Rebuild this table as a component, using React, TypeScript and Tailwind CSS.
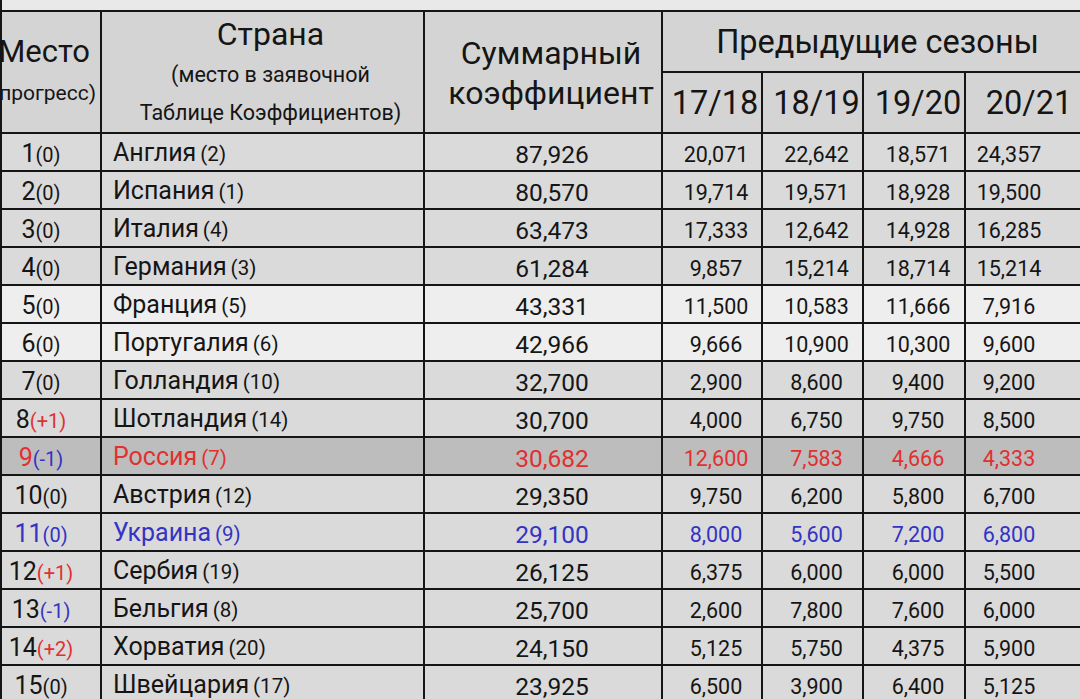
import React from "react";

type Row = {
  place: number;
  delta: string;
  country: string;
  entry: number;
  total: string;
  seasons: string[];
  tone?: "light" | "dark";
  color?: "red" | "blue";
};

const rows: Row[] = [
  { place: 1, delta: "0", country: "Англия", entry: 2, total: "87,926", seasons: ["20,071", "22,642", "18,571", "24,357"] },
  { place: 2, delta: "0", country: "Испания", entry: 1, total: "80,570", seasons: ["19,714", "19,571", "18,928", "19,500"] },
  { place: 3, delta: "0", country: "Италия", entry: 4, total: "63,473", seasons: ["17,333", "12,642", "14,928", "16,285"] },
  { place: 4, delta: "0", country: "Германия", entry: 3, total: "61,284", seasons: ["9,857", "15,214", "18,714", "15,214"] },
  { place: 5, delta: "0", country: "Франция", entry: 5, total: "43,331", seasons: ["11,500", "10,583", "11,666", "7,916"], tone: "light" },
  { place: 6, delta: "0", country: "Португалия", entry: 6, total: "42,966", seasons: ["9,666", "10,900", "10,300", "9,600"], tone: "light" },
  { place: 7, delta: "0", country: "Голландия", entry: 10, total: "32,700", seasons: ["2,900", "8,600", "9,400", "9,200"] },
  { place: 8, delta: "+1", country: "Шотландия", entry: 14, total: "30,700", seasons: ["4,000", "6,750", "9,750", "8,500"] },
  { place: 9, delta: "-1", country: "Россия", entry: 7, total: "30,682", seasons: ["12,600", "7,583", "4,666", "4,333"], tone: "dark", color: "red" },
  { place: 10, delta: "0", country: "Австрия", entry: 12, total: "29,350", seasons: ["9,750", "6,200", "5,800", "6,700"] },
  { place: 11, delta: "0", country: "Украина", entry: 9, total: "29,100", seasons: ["8,000", "5,600", "7,200", "6,800"], color: "blue" },
  { place: 12, delta: "+1", country: "Сербия", entry: 19, total: "26,125", seasons: ["6,375", "6,000", "6,000", "5,500"] },
  { place: 13, delta: "-1", country: "Бельгия", entry: 8, total: "25,700", seasons: ["2,600", "7,800", "7,600", "6,000"] },
  { place: 14, delta: "+2", country: "Хорватия", entry: 20, total: "24,150", seasons: ["5,125", "5,750", "4,375", "5,900"] },
  { place: 15, delta: "0", country: "Швейцария", entry: 17, total: "23,925", seasons: ["6,500", "3,900", "6,400", "5,125"] },
];

const cell = "border-2 border-[#151515] p-0";
const body = "border-2 border-[#151515] pb-0 pt-[5px]";

// сдвиг содержимого в колонках сезонов (как на скриншоте)
const seasonPad = ["pl-[8px]", "pl-[8px]", "pl-[8px]", "pr-[40px]"];
const yearPad = ["pl-[6px]", "pl-[8px]", "pl-[8px]", "pl-[0px]"];

function deltaColor(delta: string, row: Row) {
  if (delta.startsWith("+")) return "text-[#e03030]";
  if (delta.startsWith("-")) return "text-[#3333c4]";
  if (row.color === "blue") return "text-[#3333c4]";
  return "";
}

export default function App() {
  return (
    <div className="h-[699px] w-[1080px] overflow-hidden bg-[#e9e9e9] font-['Roboto',sans-serif] text-[#151515]">
      {/* полоска над таблицей */}
      <div className="h-[10px] border-l-2 border-[#151515]" />

      <table className="w-[1092px] table-fixed border-collapse">
        <colgroup>
          <col className="w-[100px]" />
          <col className="w-[323px]" />
          <col className="w-[238px]" />
          <col className="w-[100px]" />
          <col className="w-[101px]" />
          <col className="w-[102px]" />
          <col className="w-[128px]" />
        </colgroup>
        <thead className="bg-[#d4d4d4]">
          <tr className="h-[60px]">
            <th rowSpan={2} className={cell + " font-normal"}>
              <div className="flex flex-col items-center overflow-hidden pr-[14px]">
                <span className="whitespace-nowrap text-[31px] leading-[42px]">Место</span>
                <span className="whitespace-nowrap text-[21px] leading-[40px]">(прогресс)</span>
              </div>
            </th>
            <th rowSpan={2} className={cell + " align-top font-normal"}>
              <div className="flex flex-col items-center pl-[16px]">
                <span className="text-[32px] leading-[44px]">Страна</span>
                <span className="text-[21.5px] leading-[38px]">(место в заявочной</span>
                <span className="text-[21.5px] leading-[38px]">Таблице Коэффициентов)</span>
              </div>
            </th>
            <th rowSpan={2} className={cell + " font-normal"}>
              <div className="flex flex-col items-center pl-[16px] pt-[2px] text-[32px] leading-[40px]">
                <span>Суммарный</span>
                <span>коэффициент</span>
              </div>
            </th>
            <th colSpan={4} className={cell + " text-[32.5px] font-normal leading-[40px]"}>
              Предыдущие сезоны
            </th>
          </tr>
          <tr className="h-[60px]">
            {["17/18", "18/19", "19/20", "20/21"].map((s, i) => (
              <th
                key={s}
                className={cell + " whitespace-nowrap text-[32.5px] font-normal leading-[40px] " + yearPad[i]}
              >
                {s}
              </th>
            ))}
          </tr>
        </thead>
        <tbody>
          {rows.map((row) => {
            const bg =
              row.tone === "light"
                ? "bg-[#eeeeee]"
                : row.tone === "dark"
                ? "bg-[#bdbdbd]"
                : "bg-[#dadada]";
            const tint =
              row.color === "red"
                ? "text-[#e03030]"
                : row.color === "blue"
                ? "text-[#3333c4]"
                : "";
            return (
              <tr key={row.place} className={"h-[37.75px] leading-[28px] " + bg}>
                <td className={body + " px-0"}>
                  <div className="flex items-baseline justify-center pr-[20px]">
                    <span className={"text-[25px] " + tint}>{row.place}</span>
                    <span className={"text-[20px] " + deltaColor(row.delta, row)}>
                      ({row.delta})
                    </span>
                  </div>
                </td>
                <td className={body + " pl-[11px] pr-0 " + tint}>
                  <span className="text-[25px]">{row.country}</span>{" "}
                  <span className="text-[20.5px]">({row.entry})</span>
                </td>
                <td className={body + " pl-[18px] pr-0 text-center text-[24.5px] " + tint}>{row.total}</td>
                {row.seasons.map((v, i) => (
                  <td key={i} className={body + " text-center text-[21.5px] " + seasonPad[i] + " " + tint}>
                    {v}
                  </td>
                ))}
              </tr>
            );
          })}
        </tbody>
      </table>
    </div>
  );
}
